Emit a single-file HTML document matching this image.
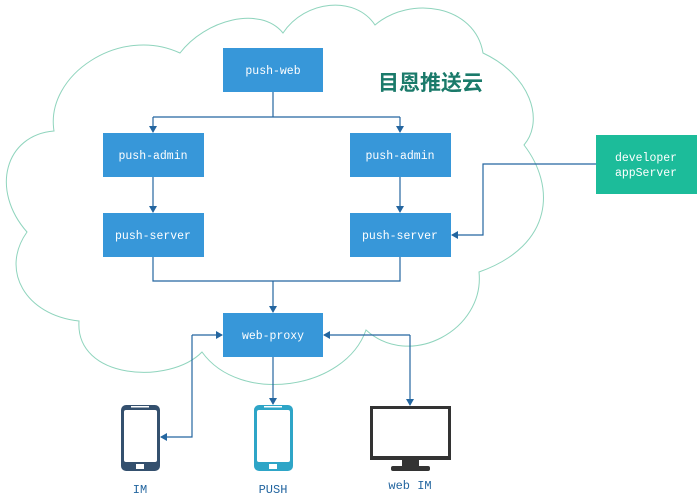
<!DOCTYPE html>
<html><head><meta charset="utf-8"><style>
body{margin:0;background:#fff;width:697px;height:498px;overflow:hidden}
svg{display:block}
.b{fill:#3797d9}
.t{font-family:"Liberation Mono",monospace;font-size:11.5px;fill:#fff;text-anchor:middle}
.l{stroke:#2466a0;stroke-width:1.2;fill:none}
.lab{font-family:"Liberation Mono",monospace;font-size:12px;fill:#2466a0;text-anchor:middle}
</style></head><body>
<svg width="697" height="498" viewBox="0 0 697 498">
<defs><marker id="a" markerWidth="8" markerHeight="8" refX="6" refY="4" orient="auto" markerUnits="userSpaceOnUse"><path d="M0,0 L7,4 L0,8 Z" fill="#2466a0"/></marker></defs>
<path d="M180,53 C205,20 260,5 283,33 C305,0 355,-5 375,25 C410,-5 475,5 483,53 C530,75 545,120 524,145 C555,185 555,245 479,272 C485,330 410,370 366,330 C345,390 240,405 202,352 C170,385 75,380 79,321 C25,315 0,270 27,232 C-10,190 5,135 54,131 C45,75 120,25 180,53 Z" fill="none" stroke="#8fd4bd" stroke-width="1"/>
<rect class="b" x="223" y="48" width="100" height="44"/><text class="t" x="273" y="74">push-web</text>
<rect class="b" x="103" y="133" width="101" height="44"/><text class="t" x="153" y="159">push-admin</text>
<rect class="b" x="350" y="133" width="101" height="44"/><text class="t" x="400" y="159">push-admin</text>
<rect class="b" x="103" y="213" width="101" height="44"/><text class="t" x="153" y="239">push-server</text>
<rect class="b" x="350" y="213" width="101" height="44"/><text class="t" x="400" y="239">push-server</text>
<rect class="b" x="223" y="313" width="100" height="44"/><text class="t" x="273" y="339">web-proxy</text>
<rect x="596" y="135" width="101" height="59" fill="#1cbc9a"/>
<text class="t" x="646" y="161">developer</text><text class="t" x="646" y="176">appServer</text>
<text x="378" y="90" font-family="'Noto Sans CJK SC',sans-serif" font-weight="bold" font-size="21" fill="#1a7a6a">目恩推送云</text>
<path class="l" d="M273,92 V117 M153,117 H400"/>
<path class="l" d="M153,117 V132" marker-end="url(#a)"/>
<path class="l" d="M400,117 V132" marker-end="url(#a)"/>
<path class="l" d="M153,177 V212" marker-end="url(#a)"/>
<path class="l" d="M400,177 V212" marker-end="url(#a)"/>
<path class="l" d="M153,257 V281 H400 V257 M273,281 V312" marker-end="url(#a)"/>
<path class="l" d="M596,164 H483 V235 H452" marker-end="url(#a)"/>
<path class="l" d="M273,357 V404" marker-end="url(#a)"/>
<path class="l" d="M192,335 H222" marker-end="url(#a)"/>
<path class="l" d="M192,335 V437 H161" marker-end="url(#a)"/>
<path class="l" d="M410,335 H324" marker-end="url(#a)"/>
<path class="l" d="M410,335 V405" marker-end="url(#a)"/>
<rect x="121" y="405" width="39" height="66" rx="5" fill="#34506e"/>
<rect x="124" y="410" width="33" height="52" rx="2" fill="#fff"/>
<rect x="136" y="464" width="8" height="5" fill="#fff"/>
<rect x="131" y="406" width="18" height="1.5" fill="#fff"/>
<rect x="254" y="405" width="39" height="66" rx="5" fill="#2ea5c7"/>
<rect x="257" y="410" width="33" height="52" rx="2" fill="#fff"/>
<rect x="269" y="464" width="8" height="5" fill="#fff"/>
<rect x="264" y="406" width="18" height="1.5" fill="#fff"/>
<rect x="370" y="406" width="81" height="54" fill="#333"/>
<rect x="373" y="409" width="75" height="47" fill="#fff"/>
<rect x="402" y="460" width="17" height="6" fill="#333"/>
<rect x="391" y="466" width="39" height="5" rx="2" fill="#333"/>
<text class="lab" x="140" y="493">IM</text>
<text class="lab" x="273" y="493">PUSH</text>
<text class="lab" x="410" y="489">web IM</text>
</svg>
</body></html>
